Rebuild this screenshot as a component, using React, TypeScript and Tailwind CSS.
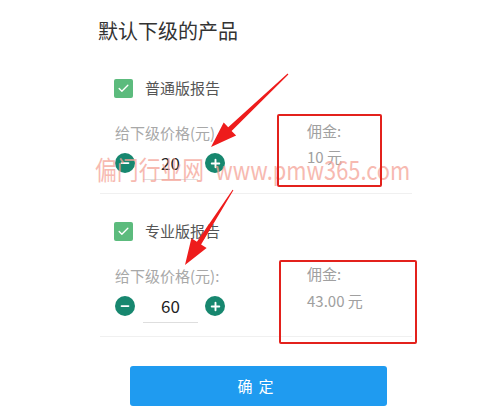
import { Check, Minus, Plus } from 'lucide-react';

const font = { fontFamily: '"Noto Sans CJK SC", "Noto Sans", sans-serif' };

type Product = {
  name: string;
  priceLabel: string;
  price: string;
  commission: string;
};

const products: Product[] = [
  { name: '普通版报告', priceLabel: '给下级价格(元)', price: '20', commission: '10 元' },
  { name: '专业版报告', priceLabel: '给下级价格(元):', price: '60', commission: '43.00 元' },
];

function Stepper({ value }: { value: string }) {
  return (
    <div className="flex items-center h-[34px]">
      <button className="w-5 h-5 rounded-full bg-[#17876f] text-white flex items-center justify-center">
        <Minus size={12} strokeWidth={3.5} />
      </button>
      <div className="ml-2 w-[55px] h-[34px] border-b border-[#dedede] flex items-center justify-center text-[17px] text-[#222]">
        {value}
      </div>
      <button className="ml-[7px] w-5 h-5 rounded-full bg-[#17876f] text-white flex items-center justify-center">
        <Plus size={13} strokeWidth={3.5} />
      </button>
    </div>
  );
}

function ProductRow({ p, first }: { p: Product; first: boolean }) {
  return (
    <div className={`ml-[100px] w-[312px] border-b border-[#f0f0f0] pb-[13px] ${first ? 'mt-[35px]' : 'mt-[27px]'}`}>
      <div className="pl-[14px] flex items-center gap-3 h-5">
        <span className="w-[19px] h-[19px] rounded-[2px] bg-[#5cbb7d] text-white flex items-center justify-center">
          <Check size={13} strokeWidth={2.5} />
        </span>
        <span className="text-[15px] text-[#555]">{p.name}</span>
      </div>

      <div className="flex mt-[25px]">
        <div className="w-[207px] pl-[15px]">
          <p className="text-[15px] leading-5 text-[#a8a8a8]">{p.priceLabel}</p>
          <div className="mt-[3px]">
            <Stepper value={p.price} />
          </div>
        </div>
        <div className={`flex flex-col text-[15px] leading-5 text-[#a0a0a0] -mt-[2px] ${first ? 'gap-[6px]' : 'gap-[7px]'}`}>
          <p>佣金:</p>
          <p>{p.commission}</p>
        </div>
      </div>
    </div>
  );
}

export default function App() {
  return (
    <div className="relative w-[500px] h-[408px] bg-white overflow-hidden" style={font}>
      <h1 className="pt-[19px] pl-[98px] text-[20px] leading-6 text-[#333]">默认下级的产品</h1>

      {products.map((p, i) => (
        <ProductRow key={p.name} p={p} first={i === 0} />
      ))}

      <div className="ml-[130px] mt-[29px] w-[257px] h-[40px] rounded-[3px] bg-[#1f9bf0] flex items-center justify-center text-[15px] text-white tracking-[6px]">
        确定
      </div>

      {/* 水印 */}
      <div className="absolute left-[95px] top-[152px] flex items-center origin-left scale-x-[0.84] text-[26px] leading-[34px] text-[#f5a397] opacity-75 pointer-events-none whitespace-nowrap">
        <span>偏门行业网</span>
        <span className="ml-[13px]">www.pmw365.com</span>
      </div>

      {/* 红框标注 */}
      <div className="absolute left-[277px] top-[114px] w-[105px] h-[73px] border-2 border-[#e3211c] rounded-[2px] pointer-events-none" />
      <div className="absolute left-[279px] top-[260px] w-[138px] h-[84px] border-2 border-[#e3211c] rounded-[2px] pointer-events-none" />

      {/* 箭头 */}
      <svg className="absolute inset-0 pointer-events-none" width="500" height="408" viewBox="0 0 500 408">
        <polygon
          fill="#ee1c1c"
          points="288.4,74.4 231.6,130.9 236.1,135.6 211,147 223.7,122.6 228.2,127.3 287.6,73.6"
        />
        <polygon
          fill="#ee1c1c"
          points="233.4,190.3 201.1,244.4 206.6,247.9 185,265 191.4,238.2 196.9,241.8 232.6,189.7"
        />
      </svg>
    </div>
  );
}
